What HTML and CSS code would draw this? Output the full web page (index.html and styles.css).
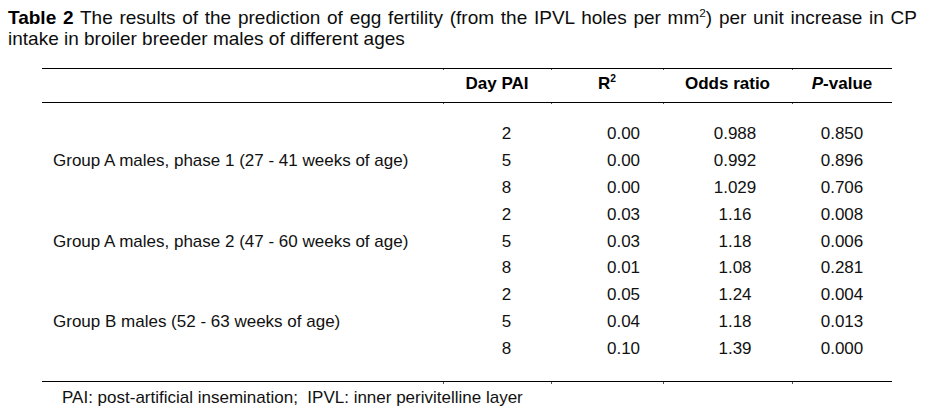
FILE: index.html
```html
<!DOCTYPE html>
<html lang="en">
<head>
<meta charset="utf-8">
<title>Table 2</title>
<link rel="stylesheet" href="styles.css">
</head>
<body>
<div class="page">
  <p class="caption"><b>Table 2</b> The results of the prediction of egg fertility (from the IPVL holes per mm<sup>2</sup>) per unit increase in CP intake in broiler breeder males of different ages</p>

  <div class="table">
    <div class="thead">
      <div class="th"></div>
      <div class="th tick">Day PAI</div>
      <div class="th tick">R<sup>2</sup></div>
      <div class="th tick">Odds ratio</div>
      <div class="th tick"><i>P</i>-value</div>
    </div>

    <div class="tbody">
      <div class="group">Group A males, phase 1 (27 - 41 weeks of age)</div>
      <div class="td day">2</div><div class="td r2">0.00</div><div class="td odds">0.988</div><div class="td pval">0.850</div>
      <div class="td day">5</div><div class="td r2">0.00</div><div class="td odds">0.992</div><div class="td pval">0.896</div>
      <div class="td day">8</div><div class="td r2">0.00</div><div class="td odds">1.029</div><div class="td pval">0.706</div>

      <div class="group">Group A males, phase 2 (47 - 60 weeks of age)</div>
      <div class="td day">2</div><div class="td r2">0.03</div><div class="td odds">1.16</div><div class="td pval">0.008</div>
      <div class="td day">5</div><div class="td r2">0.03</div><div class="td odds">1.18</div><div class="td pval">0.006</div>
      <div class="td day">8</div><div class="td r2">0.01</div><div class="td odds">1.08</div><div class="td pval">0.281</div>

      <div class="group">Group B males (52 - 63 weeks of age)</div>
      <div class="td day">2</div><div class="td r2">0.05</div><div class="td odds">1.24</div><div class="td pval">0.004</div>
      <div class="td day">5</div><div class="td r2">0.04</div><div class="td odds">1.18</div><div class="td pval">0.013</div>
      <div class="td day">8</div><div class="td r2">0.10</div><div class="td odds">1.39</div><div class="td pval">0.000</div>
    </div>

    <div class="tfoot">
      <div class="fcell"></div>
      <div class="fcell tick"></div>
      <div class="fcell tick"></div>
      <div class="fcell tick"></div>
      <div class="fcell tick"></div>
    </div>
    <p class="note">PAI: post-artificial insemination;&nbsp; IPVL: inner perivitelline layer</p>
  </div>
</div>
</body>
</html>
```

FILE: styles.css
```css
html, body {
  margin: 0;
  padding: 0;
  background: #ffffff;
}

body {
  font-family: "Liberation Sans", Arial, sans-serif;
  color: #111111;
}

.page {
  padding: 7px 12px 0 8px;
}

.caption {
  margin: 0;
  font-size: 19px;
  line-height: 21px;
  text-align: justify;
  color: #0d0d0d;
}

.caption b {
  font-weight: bold;
  color: #000000;
}

sup {
  font-size: 0.62em;
  line-height: 0;
  vertical-align: 0.62em;
}

.table {
  margin: 19px 0 0 34px;
  width: 850px;
  font-size: 17px;
}

.thead,
.tbody,
.tfoot {
  display: grid;
  grid-template-columns: 401px 108px 112px 129px 100px;
}

.thead {
  border-top: 1px solid #000000;
  border-bottom: 1px solid #000000;
  height: 33px;
}

.th {
  position: relative;
  padding-top: 5px;
  line-height: 19px;
  font-weight: bold;
  text-align: center;
  color: #000000;
}

.th sup {
  font-size: 0.6em;
  vertical-align: 0.7em;
}

.tick::before,
.tick::after {
  content: "";
  position: absolute;
  left: 0;
  width: 1px;
  height: 1px;
  background: #555555;
}

.th.tick::before {
  top: 0;
}

.th.tick::after {
  bottom: -2px;
}

.tbody {
  grid-auto-rows: 26.9px;
  padding: 18px 0;
  line-height: 26.9px;
}

.group {
  grid-column: 1;
  grid-row: span 3;
  align-self: center;
  padding-left: 11px;
  white-space: nowrap;
}

.td {
  text-align: center;
}

.td.day {
  grid-column: 2;
  padding-left: 19px;
}

.td.r2 {
  grid-column: 3;
  padding-left: 33px;
}

.td.odds {
  grid-column: 4;
  padding-left: 15px;
}

.td.pval {
  grid-column: 5;
}

.tfoot {
  border-top: 1px solid #000000;
  height: 0;
}

.fcell {
  position: relative;
}

.fcell.tick::after {
  top: 0;
  height: 2px;
}

.fcell.tick::before {
  display: none;
}

.note {
  margin: 0;
  padding: 6px 0 0 20px;
  line-height: 20px;
  white-space: nowrap;
}
```
